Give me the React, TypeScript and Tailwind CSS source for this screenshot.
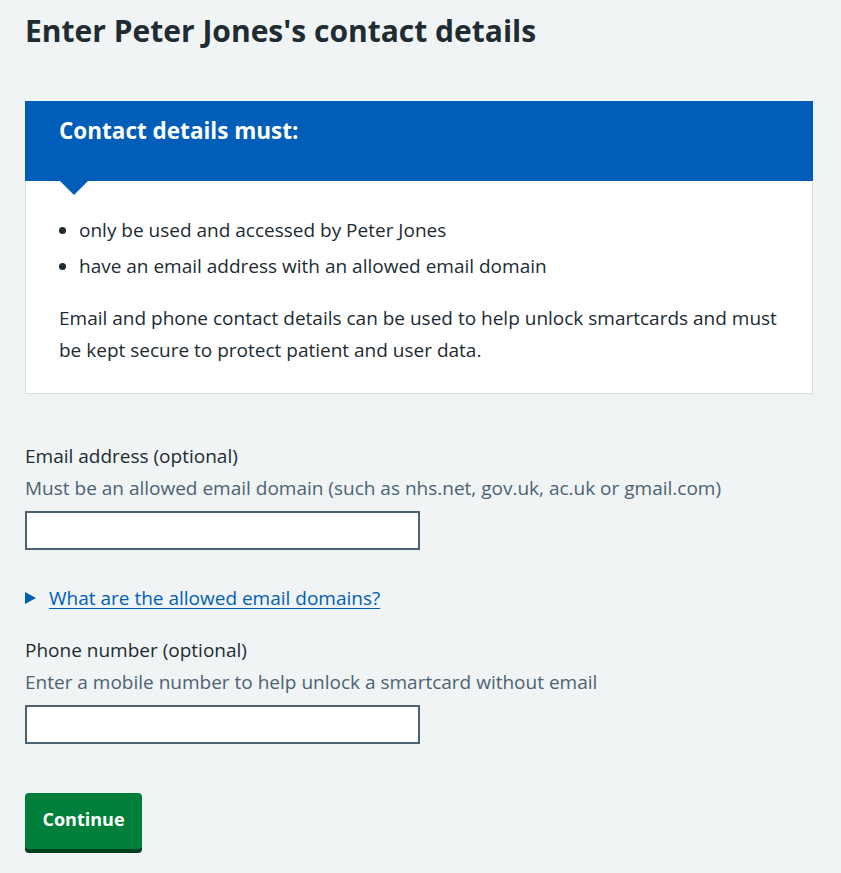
import React from 'react';

const font = { fontFamily: '"Open Sans", "Liberation Sans", sans-serif' };

const Field: React.FC<{ label: string; hint: string; id: string }> = ({ label, hint, id }) => (
    <div>
        <label htmlFor={id} className="block text-[19px] leading-[28px] text-[#212b32]">
            {label}
        </label>
        <div className="mt-[4px] text-[19px] leading-[28px] text-[#4c6272]">{hint}</div>
        <input
            id={id}
            type="text"
            className="mt-[9px] block w-[395px] h-[39px] bg-white border-2 border-[#4c6272] outline-none px-2 text-[19px]"
        />
    </div>
);

export default function App() {
    return (
        <div className="min-h-screen bg-[#f0f4f5] px-[25px] pt-[11px] pb-[20px] text-[#212b32]" style={font}>
            <h1 className="text-[30px] leading-[40px] font-bold">Enter Peter Jones's contact details</h1>

            {/* Contact details panel */}
            <div className="mt-[50px] w-[788px]">
                <div className="relative h-[80px] bg-[#005eb8] pl-[34px] pt-[14px]">
                    <h2 className="text-[22.5px] leading-[32px] font-bold text-white">Contact details must:</h2>
                    <svg className="absolute left-[35px] top-[80px]" width="28" height="14" viewBox="0 0 28 14">
                        <path d="M0 0 H28 L14 14 Z" fill="#005eb8" />
                    </svg>
                </div>
                <div className="bg-white border border-t-0 border-[#d8dde0] pl-[33px] pr-[32px] pt-[35px] pb-[27px]">
                    <ul className="list-disc pl-[20px] text-[19px] leading-[28px] mb-[22px]">
                        <li className="mb-[8px]">only be used and accessed by Peter Jones</li>
                        <li className="mb-[8px]">have an email address with an allowed email domain</li>
                    </ul>
                    <p className="text-[19px] leading-[32px]">
                        Email and phone contact details can be used to help unlock smartcards and must be kept secure to protect patient and user data.
                    </p>
                </div>
            </div>

            {/* Form */}
            <div className="mt-[48px]">
                <Field
                    id="email"
                    label="Email address (optional)"
                    hint="Must be an allowed email domain (such as nhs.net, gov.uk, ac.uk or gmail.com)"
                />

                <div className="mt-[34px] flex items-center text-[19px] leading-[28px]">
                    <svg className="mr-[13px]" width="11" height="12" viewBox="0 0 11 12">
                        <path d="M0 0 L11 6 L0 12 Z" fill="#005eb8" />
                    </svg>
                    <a href="#" className="text-[#005eb8] underline underline-offset-[3px]">What are the allowed email domains?</a>
                </div>

                <div className="mt-[24px]">
                    <Field
                        id="phone"
                        label="Phone number (optional)"
                        hint="Enter a mobile number to help unlock a smartcard without email"
                    />
                </div>

                <button className="mt-[49px] h-[56px] w-[117px] pt-[12px] justify-center bg-[#007f3b] text-white font-bold text-[18px] leading-[28px] rounded-[4px] shadow-[0_4px_0_#00401e] flex items-start">
                    Continue
                </button>
            </div>
        </div>
    );
}
